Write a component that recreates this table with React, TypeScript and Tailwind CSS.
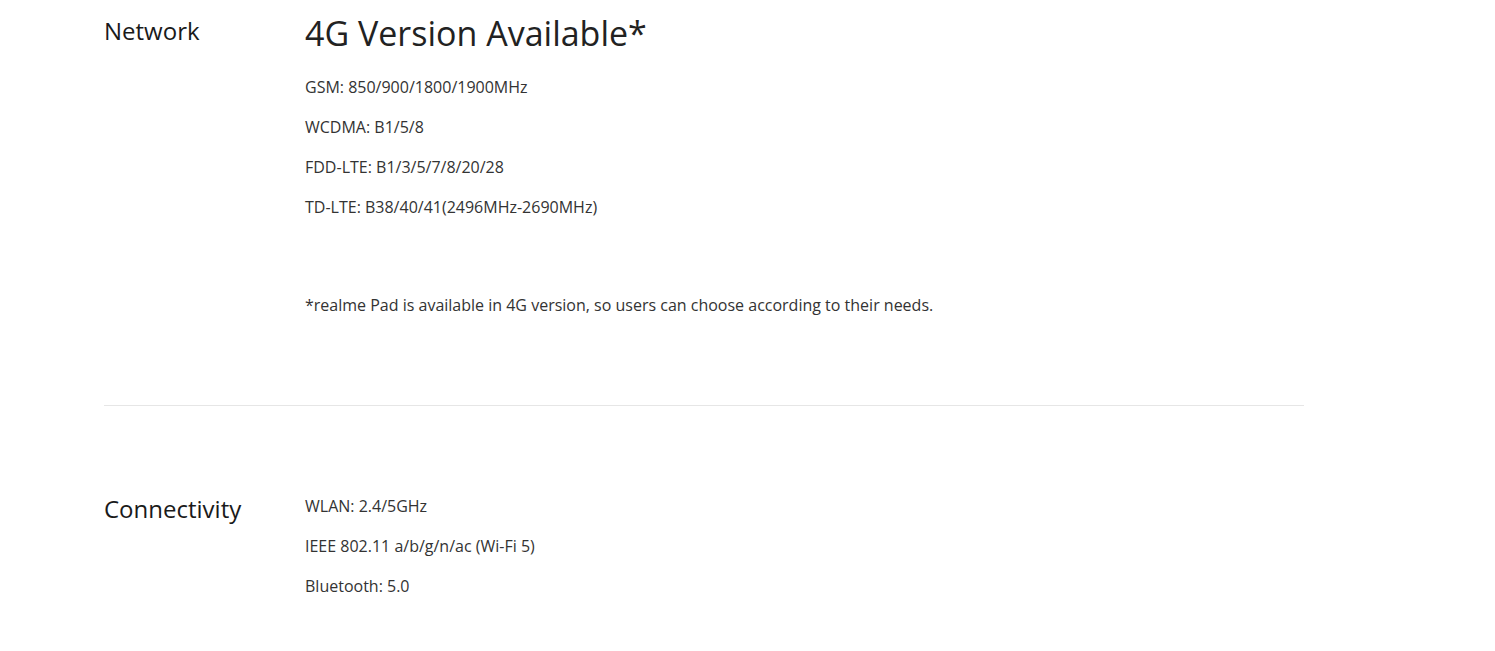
import React from 'react';

const font = { fontFamily: '"Open Sans", "Noto Sans", sans-serif' };

const SpecLine: React.FC<{ children: React.ReactNode; last?: boolean }> = ({ children, last }) => (
  <p className={`text-[16px] leading-[24px] text-[#333333] ${last ? '' : 'mb-4'}`}>{children}</p>
);

export default function App() {
  return (
    <div className="min-h-screen bg-white" style={font}>
      <div className="ml-[104px] w-[1200px]">
        {/* Network */}
        <section className="grid grid-cols-[201px_1fr] pt-[11px] pb-[88px]">
          <h3 className="pt-[4px] text-[24px] leading-[32px] text-[#1a1a1a]">Network</h3>
          <div>
            <h2 className="text-[34px] leading-[44px] text-[#222222] mb-[20px]">4G Version Available*</h2>
            <SpecLine>GSM: 850/900/1800/1900MHz</SpecLine>
            <SpecLine>WCDMA: B1/5/8</SpecLine>
            <SpecLine>FDD-LTE: B1/3/5/7/8/20/28</SpecLine>
            <SpecLine last>TD-LTE: B38/40/41(2496MHz-2690MHz)</SpecLine>
            <p className="mt-[74px] text-[16px] leading-[24px] text-[#333333]">
              *realme Pad is available in 4G version, so users can choose according to their needs.
            </p>
          </div>
        </section>

        <div className="h-px bg-[#e6e6e6]" />

        {/* Connectivity */}
        <section className="grid grid-cols-[201px_1fr] pt-[87px] pb-10">
          <h3 className="text-[24px] leading-[32px] text-[#1a1a1a]">Connectivity</h3>
          <div className="pt-px">
            <SpecLine>WLAN: 2.4/5GHz</SpecLine>
            <SpecLine>IEEE 802.11 a/b/g/n/ac (Wi-Fi 5)</SpecLine>
            <SpecLine last>Bluetooth: 5.0</SpecLine>
          </div>
        </section>
      </div>
    </div>
  );
}
